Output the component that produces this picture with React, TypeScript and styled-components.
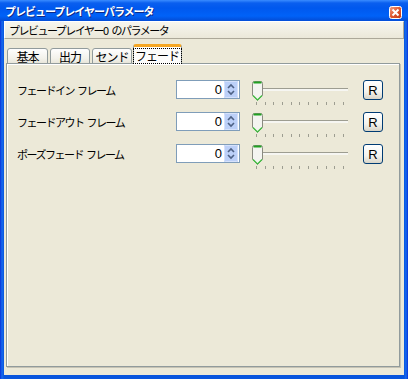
import React from 'react'
import styled, { createGlobalStyle } from 'styled-components'

const GlobalStyle = createGlobalStyle`
	html, body {
		margin: 0;
		padding: 0;
		background: #ece9d8;
	}
	* {
		box-sizing: border-box;
	}
`

const FONT = `'Noto Sans CJK JP', 'Liberation Sans', sans-serif`

const rows = ['フェードイン フレーム', 'フェードアウト フレーム', 'ポーズフェード フレーム']
const tabs = [
	{ name: '基本', width: 41 },
	{ name: '出力', width: 40 },
	{ name: 'センド', width: 40 },
	{ name: 'フェード', width: 49 },
]
const tickCount = 11

const CloseIcon: React.FC = () => (
	<svg width="13" height="13" viewBox="0 0 13 13">
		<defs>
			<linearGradient id="cls" x1="0" y1="0" x2="1" y2="1">
				<stop offset="0" stopColor="#f3a58a" />
				<stop offset="0.5" stopColor="#e0572e" />
				<stop offset="1" stopColor="#c23a15" />
			</linearGradient>
		</defs>
		<rect x="0.5" y="0.5" width="12" height="12" rx="2" fill="url(#cls)" stroke="#fff" />
		<path d="M3.5 3.5 L9.5 9.5 M9.5 3.5 L3.5 9.5" stroke="#fff" strokeWidth="2" />
	</svg>
)

const SpinIcon: React.FC = () => (
	<svg width="14" height="17" viewBox="0 0 14 17">
		<rect x="0" y="0" width="14" height="17" rx="1" fill="#bcd0f8" />
		<rect x="0.5" y="0.5" width="13" height="16" rx="1" fill="none" stroke="#d6e2fc" />
		<path d="M4 7 L7 4 L10 7" stroke="#4d6185" strokeWidth="1.6" fill="none" />
		<path d="M4 10 L7 13 L10 10" stroke="#4d6185" strokeWidth="1.6" fill="none" />
	</svg>
)

const ThumbIcon: React.FC = () => (
	<svg width="11" height="20" viewBox="0 0 11 20">
		<path d="M0.5 2.5 Q0.5 0.5 2.5 0.5 L8.5 0.5 Q10.5 0.5 10.5 2.5 L10.5 14.5 L5.5 19.5 L0.5 14.5 Z" fill="#f4f4f0" stroke="#8a8a80" />
		<path d="M1.5 1.5 L9.5 1.5" stroke="#21a121" strokeWidth="2" />
		<path d="M1 14.5 L5.5 19 L10 14.5" stroke="#3fbf3f" strokeWidth="1.2" fill="none" />
	</svg>
)

const Slider: React.FC = () => (
	<SliderBox>
		<Track />
		<Thumb>
			<ThumbIcon />
		</Thumb>
		<Ticks>
			{Array.from({ length: tickCount }).map((_, i) => (
				<Tick key={i} />
			))}
		</Ticks>
	</SliderBox>
)

const App: React.FC = () => {
	const last = tabs.length - 1
	return (
		<>
			<GlobalStyle />
			<Window>
				<TitleBar>
					<Title>プレビュープレイヤーパラメータ</Title>
					<CloseButton>
						<CloseIcon />
					</CloseButton>
				</TitleBar>
				<Body>
					<Header>プレビュープレイヤー0 のパラメータ</Header>
					<TabRow>
						{tabs.map((t, i) => (
							<Tab key={t.name} active={i === last} width={t.width}>
								{i === last ? <Focus>{t.name}</Focus> : t.name}
							</Tab>
						))}
					</TabRow>
					<Panel>
						{rows.map((label) => (
							<Row key={label}>
								<Label>{label}</Label>
								<Spin>
									<Value>0</Value>
									<SpinIcon />
								</Spin>
								<Slider />
								<ResetButton>R</ResetButton>
							</Row>
						))}
					</Panel>
				</Body>
			</Window>
		</>
	)
}

export default App

const Window = styled.div`
	width: 408px;
	height: 379px;
	display: flex;
	flex-direction: column;
	background: linear-gradient(90deg, #0831d9 0, #166aee 2px, #0855dd 4px, #0855dd calc(100% - 4px), #166aee calc(100% - 2px), #0831d9 100%);
	padding: 0 4px 4px;
	font-family: ${FONT};
	font-size: 11px;
	color: #000;
	white-space: nowrap;
`

const TitleBar = styled.div`
	height: 21px;
	margin: 0 -4px;
	padding: 0 6px 0 5px;
	display: flex;
	align-items: center;
	background: linear-gradient(#3a8cff 0, #0a5fef 3px, #0058ee 8px, #0062f8 16px, #0350db 20px);
`

const Title = styled.div`
	flex: 1;
	color: #fff;
	font-weight: bold;
	font-size: 11px;
	letter-spacing: -1px;
	text-shadow: 1px 1px 0 #0a2a88;
	margin-top: 1px;
`

const CloseButton = styled.div`
	width: 13px;
	height: 13px;
	display: flex;
	margin-top: 3px;
`

const Body = styled.div`
	flex: 1;
	display: flex;
	flex-direction: column;
	background: #ece9d8;
	padding-bottom: 8px;
`

const Header = styled.div`
	height: 18px;
	padding: 0 4px;
	display: flex;
	align-items: center;
	letter-spacing: -1.5px;
	word-spacing: 3px;
	background: linear-gradient(#f7f6ef, #ebe8d9);
	border-top: 1px solid #fff;
	border-left: 1px solid #fff;
	border-bottom: 1px solid #aca899;
	border-right: 1px solid #aca899;
`

const TabRow = styled.div`
	display: flex;
	align-items: flex-end;
	height: 25px;
	margin-left: 3px;
	gap: 2px;
	position: relative;
	z-index: 1;
	margin-bottom: -1px;
`

const Tab = styled.div<{ active?: boolean; width: number }>`
	width: ${({ width }) => width}px;
	height: ${({ active }) => (active ? '20px' : '16px')};
	margin-left: ${({ active }) => (active ? '-1px' : '0')};
	display: flex;
	align-items: center;
	justify-content: center;
	border: 1px solid #919b9c;
	border-bottom: ${({ active }) => (active ? 'none' : '1px solid #919b9c')};
	border-top: ${({ active }) => (active ? '3px solid #f5a623' : '1px solid #919b9c')};
	border-radius: 3px 3px 0 0;
	background: ${({ active }) => (active ? '#fcfcfb' : 'linear-gradient(#fefefe, #f2f1ea 70%, #e8e6da)')};
	font-size: 12px;
	letter-spacing: -1px;
`

const Focus = styled.span`
	border: 1px dotted #000;
	padding: 0 2px 0 1px;
	line-height: 14px;
`

const Panel = styled.div`
	flex: 1;
	margin: 0 4px 0 2px;
	border: 1px solid #919b9c;
	box-shadow: inset 1px 1px 0 #fff, 1px 1px 0 #c6c3b4;
	background: #ece9d8;
	padding: 16px 0 0 10px;
	display: flex;
	flex-direction: column;
	gap: 12px;
`

const Row = styled.div`
	height: 20px;
	display: flex;
	align-items: flex-start;
`

const Label = styled.div`
	width: 159px;
	line-height: 20px;
	font-size: 11px;
	letter-spacing: -1.5px;
	word-spacing: 2px;
`

const Spin = styled.div`
	width: 64px;
	height: 19px;
	border: 1px solid #7f9db9;
	background: #fff;
	display: flex;
	align-items: center;
	padding-right: 1px;
`

const Value = styled.div`
	flex: 1;
	text-align: right;
	padding-right: 2px;
	font-family: 'Liberation Sans', sans-serif;
	font-size: 13px;
`

const SliderBox = styled.div`
	position: relative;
	width: 96px;
	height: 26px;
	margin-left: 12px;
`

const Track = styled.div`
	position: absolute;
	left: 4px;
	right: 0;
	top: 8px;
	height: 3px;
	border-top: 1px solid #9d9d91;
	background: #f6f6f2;
`

const Thumb = styled.div`
	position: absolute;
	left: 0;
	top: 1px;
	display: flex;
`

const Ticks = styled.div`
	position: absolute;
	left: 4px;
	right: 4px;
	top: 22px;
	display: flex;
	justify-content: space-between;
`

const Tick = styled.div`
	width: 1px;
	height: 3px;
	background: #9d9d91;
`

const ResetButton = styled.div`
	width: 20px;
	height: 20px;
	margin-left: 15px;
	border: 1px solid #003c74;
	border-radius: 3px;
	background: linear-gradient(#ffffff, #f3f3ee 60%, #d8d5c8);
	display: flex;
	align-items: center;
	justify-content: center;
	font-family: 'Liberation Sans', sans-serif;
	font-size: 13px;
`
